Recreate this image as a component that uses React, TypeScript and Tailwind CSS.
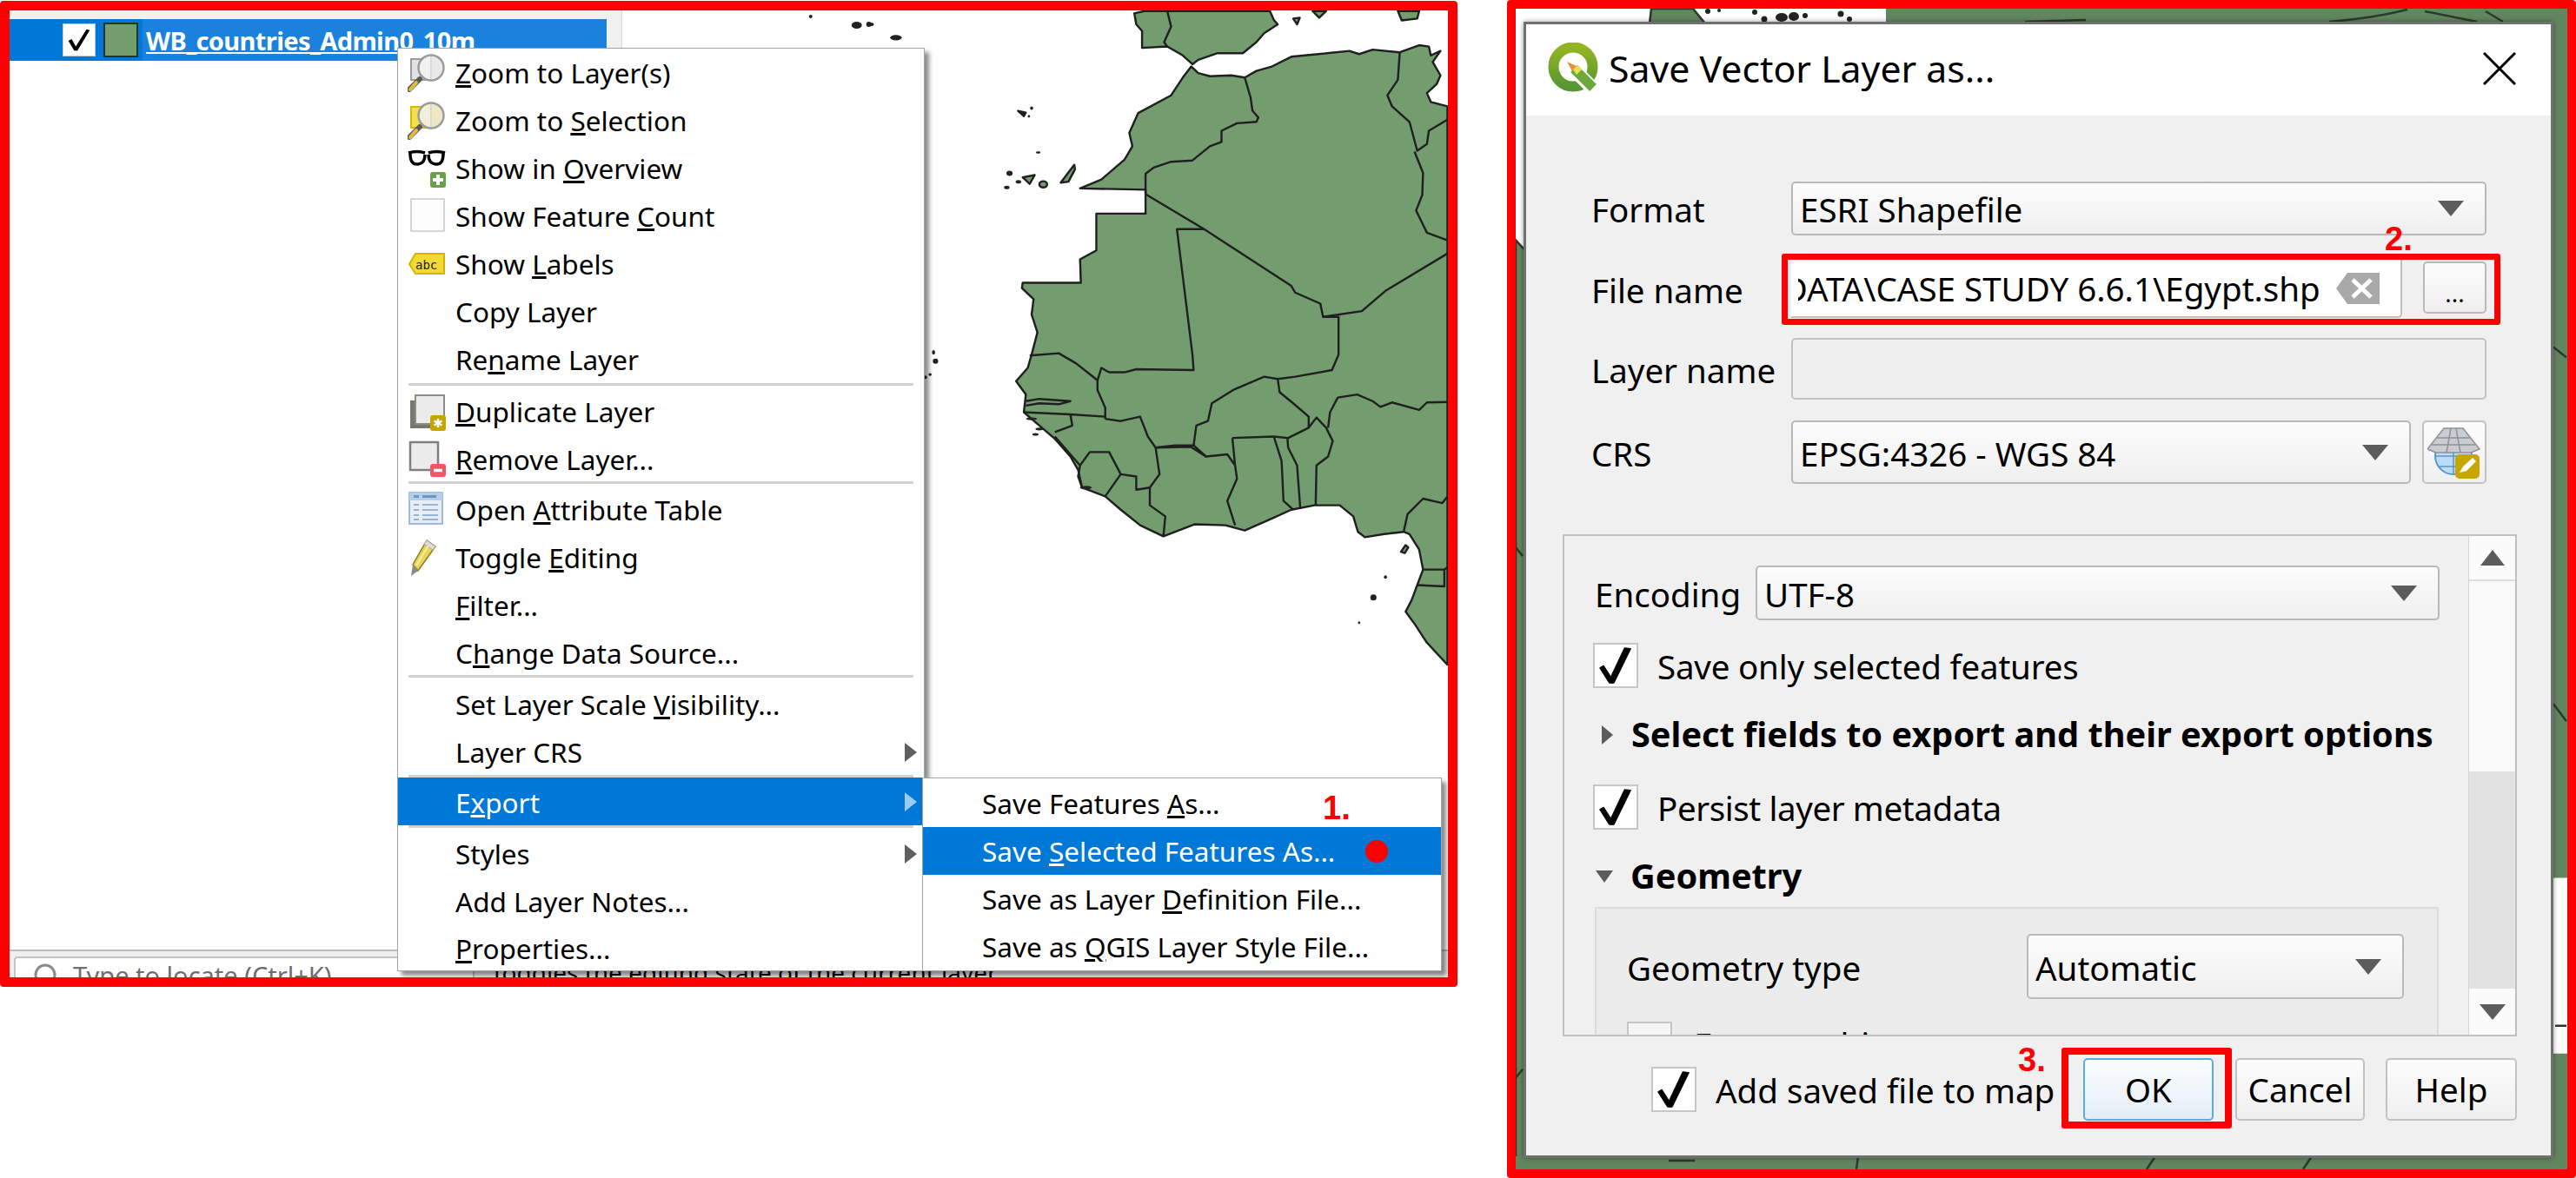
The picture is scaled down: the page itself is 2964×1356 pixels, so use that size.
import React from "react";

const Check = () => (
  <svg viewBox="0 0 52 52" className="w-full h-full">
    <path d="M6 29 L11 26 L20 40 L37 4 L45 5 L24 48 L18 48 Z" fill="#000" stroke="#000" strokeWidth="1" strokeLinejoin="round" />
  </svg>
);

const CheckBox = ({ className = "" }: { className?: string }) => (
  <div className={"w-[52px] h-[52px] shrink-0 bg-white border-2 border-[#c6c6c6] " + className}>
    <Check />
  </div>
);

const Tri = ({ color = "#5c5c5c", className = "" }: { color?: string; className?: string }) => (
  <svg viewBox="0 0 30 18" className={"w-[30px] h-[18px] " + className}>
    <path d="M0 0 H30 L15 18 Z" fill={color} />
  </svg>
);

const MenuArrow = ({ color = "#606060" }: { color?: string }) => (
  <svg viewBox="0 0 14 22" className="w-[14px] h-[22px]">
    <path d="M0 0 L14 11 L0 22 Z" fill={color} />
  </svg>
);

const Magnifier = ({ selected }: { selected?: boolean }) => (
  <svg viewBox="0 0 44 44" className="w-[44px] h-[44px]">
    <rect x="4" y="6" width="26" height="24" fill={selected ? "#f4e04d" : "#e2e2e2"} stroke={selected ? "#d9b900" : "#9a9a9a"} strokeWidth="2" />
    <path d="M2 41 L14 29" stroke="#5a5a5a" strokeWidth="6" strokeLinecap="round" />
    <path d="M3 41 L10 33" stroke="#e4bd3b" strokeWidth="4" strokeLinecap="round" />
    <circle cx="27" cy="16" r="14.5" fill={selected ? "#f2efd8" : "#f1f1f1"} stroke="#9b9b9b" strokeWidth="2.5" />
    <path d="M27 3 V29" stroke="#cfcfcf" strokeWidth="1.5" />
    <path d="M27 3 A13 13 0 0 1 27 29 Z" fill={selected ? "#e9e2b5" : "#e4e4e4"} opacity="0.6" />
  </svg>
);

const Glasses = () => (
  <svg viewBox="0 0 44 44" className="w-[44px] h-[44px]">
    <path d="M1 4 Q11 1 20 4 M24 4 Q33 1 43 4" stroke="#000" strokeWidth="3.5" fill="none" />
    <path d="M3 5 Q3 18 12 17 Q20 16 20 6 M24 6 Q24 16 32 17 Q41 18 41 5" stroke="#000" strokeWidth="3.5" fill="none" />
    <rect x="26" y="26" width="18" height="18" rx="3" fill="#589632" opacity="0.9" />
    <path d="M35 29 V41 M29 35 H41" stroke="#fff" strokeWidth="4" />
  </svg>
);

const BlankIcon = () => (
  <svg viewBox="0 0 44 44" className="w-[44px] h-[44px]">
    <rect x="4" y="2" width="38" height="37" fill="#fdfdfd" stroke="#c9c9c9" strokeWidth="1.5" />
  </svg>
);

const LabelsIcon = () => (
  <svg viewBox="0 0 44 28" className="w-[44px] h-[28px]">
    <path d="M9 2 H42 V25 H9 L2 14 Z" fill="#f2d936" stroke="#d6b400" strokeWidth="2" />
    <text x="9" y="20" fontSize="14" fontFamily="'DejaVu Sans Mono', monospace" fill="#222">abc</text>
  </svg>
);

const DuplicateIcon = () => (
  <svg viewBox="0 0 44 44" className="w-[44px] h-[44px]">
    <rect x="3" y="9" width="34" height="32" fill="#77776d" />
    <rect x="9" y="3" width="33" height="33" fill="#ececec" stroke="#8c8c84" strokeWidth="2" />
    <rect x="26" y="26" width="18" height="18" rx="3" fill="#c8a600" />
    <path d="M35 30 V40 M30.5 32.5 L39.5 37.5 M39.5 32.5 L30.5 37.5" stroke="#fff" strokeWidth="2.5" />
  </svg>
);

const RemoveIcon = () => (
  <svg viewBox="0 0 44 44" className="w-[44px] h-[44px]">
    <rect x="3" y="2" width="32" height="32" fill="#ececec" stroke="#808080" strokeWidth="2.5" />
    <rect x="26" y="27" width="18" height="15" rx="3" fill="#f55560" />
    <path d="M30 34.5 H40" stroke="#fff" strokeWidth="3.5" />
  </svg>
);

const TableIcon = () => (
  <svg viewBox="0 0 44 44" className="w-[44px] h-[44px]">
    <rect x="2" y="2" width="38" height="36" fill="#e6edf5" stroke="#81a8d4" strokeWidth="1.5" />
    <rect x="2" y="2" width="38" height="9" fill="#b4cfea" />
    <path d="M7 6.5 H13 M17 6.5 H33" stroke="#7095c0" strokeWidth="3" />
    <path d="M7 16 H13 M17 16 H35 M7 22 H13 M17 22 H35 M7 28 H13 M17 28 H35 M7 33 H13 M17 33 H35" stroke="#7aa0cb" strokeWidth="1.5" />
  </svg>
);

const PencilIcon = () => (
  <svg viewBox="0 0 44 46" className="w-[44px] h-[46px]">
    <path d="M22 3 L32 10 L12 38 L6 31 Z" fill="#e9d45a" stroke="#8c7a1e" strokeWidth="1.5" />
    <path d="M22 3 L32 10 L29 14 L19 7 Z" fill="#dcdcdc" stroke="#aaa" strokeWidth="1" />
    <path d="M6 31 L12 38 L4 44 Z" fill="#8a8a8a" />
    <path d="M24 9 L10 32" stroke="#f6ecaa" strokeWidth="2" />
  </svg>
);

type Item = { icon?: React.ReactNode; label: React.ReactNode; arrow?: boolean; active?: boolean; last?: boolean };

const MenuRow = ({ icon, label, arrow, active, last }: Item) => (
  <div className={"flex items-center pl-[11px] pr-[8px] shrink-0 " + (last ? "h-[53px] " : "h-[55px] ") + (active ? "bg-[#0078d7] text-white" : "text-black")}>
    <div className="w-[44px] h-[46px] shrink-0 flex items-center justify-center">{icon}</div>
    <div className={"ml-[11px] flex-1 text-[31.5px] leading-none whitespace-nowrap " + (active ? "pt-[3px]" : "")}>{label}</div>
    {arrow && <MenuArrow color={active ? "#9ccbf0" : "#606060"} />}
  </div>
);

const Sep = ({ className = "" }: { className?: string }) => (
  <div className={"mx-[12px] shrink-0 " + className}>
    <div className="h-[3px] bg-[#d2d2d2]" />
  </div>
);

const ContextMenu = () => (
  <div className="absolute left-[446px] top-[43px] w-[607px] h-[1063px] flex flex-col bg-white border border-[#a3a3a3] overflow-hidden shadow-[5px_5px_5px_rgba(0,0,0,0.45)]">
    <MenuRow icon={<Magnifier />} label={<><u>Z</u>oom to Layer(s)</>} />
    <MenuRow icon={<Magnifier selected />} label={<>Zoom to <u>S</u>election</>} />
    <MenuRow icon={<Glasses />} label={<>Show in <u>O</u>verview</>} />
    <MenuRow icon={<BlankIcon />} label={<>Show Feature <u>C</u>ount</>} />
    <MenuRow icon={<LabelsIcon />} label={<>Show <u>L</u>abels</>} />
    <MenuRow label="Copy Layer" />
    <MenuRow label={<>Re<u>n</u>ame Layer</>} />
    <Sep className="h-[5px]" />
    <MenuRow icon={<DuplicateIcon />} label={<><u>D</u>uplicate Layer</>} />
    <MenuRow icon={<RemoveIcon />} label={<><u>R</u>emove Layer...</>} />
    <Sep className="-mt-[2px] h-[5px]" />
    <MenuRow icon={<TableIcon />} label={<>Open <u>A</u>ttribute Table</>} />
    <MenuRow icon={<PencilIcon />} label={<>Toggle <u>E</u>diting</>} />
    <MenuRow label={<><u>F</u>ilter...</>} />
    <MenuRow label={<>C<u>h</u>ange Data Source...</>} />
    <Sep className="-mt-[2px] h-[6px]" />
    <MenuRow label={<>Set Layer Scale <u>V</u>isibility...</>} />
    <MenuRow label="Layer CRS" arrow />
    <Sep className="-mt-[1px] h-[3px]" />
    <MenuRow active arrow label={<>E<u>x</u>port</>} />
    <Sep className="h-[5px]" />
    <MenuRow arrow label="Styles" />
    <MenuRow label="Add Layer Notes..." />
    <MenuRow last label={<><u>P</u>roperties...</>} />
  </div>
);

const SubRow = ({ label, active }: { label: React.ReactNode; active?: boolean }) => (
  <div className={"h-[55px] flex items-center pl-[68px] text-[31.5px] leading-none whitespace-nowrap " + (active ? "bg-[#0078d7] text-white" : "text-black")}>
    <span>{label}</span>
  </div>
);

const SubMenu = () => (
  <div className="absolute left-[1050px] top-[883px] w-[598px] h-[223px] bg-white border border-[#a3a3a3] pt-[1px] overflow-hidden shadow-[5px_5px_5px_rgba(0,0,0,0.45)]">
    <SubRow label={<>Save Features <u>A</u>s...</>} />
    <SubRow active label={<>Save <u>S</u>elected Features As...</>} />
    <SubRow label={<>Save as Layer <u>D</u>efinition File...</>} />
    <SubRow label={<>Save as <u>Q</u>GIS Layer Style File...</>} />
  </div>
);

const MapDrawing = () => (
  <svg viewBox="716 12 951 1081" preserveAspectRatio="none" className="absolute inset-0 w-full h-full">
    <circle cx="933" cy="19" r="2" fill="#222" />
    <ellipse cx="986" cy="29" rx="6" ry="4" fill="#222" />
    <circle cx="1000" cy="28" r="3" fill="#222" />
    <g transform="translate(1000 0) scale(0.4464 0.5102)" fill="#739c6f" stroke="#1f1f1f" strokeWidth="2.4" strokeLinejoin="round">
      <path vectorEffect="non-scaling-stroke" d="M685 30 L710 25 L1035 25 L1045 45 L1055 55 L1020 75 L1000 95 L965 120 L900 120 L850 135 L835 145 L810 125 L770 105 L705 108 L705 70 L690 55 Z" />
      <path vectorEffect="non-scaling-stroke" fill="none" d="M770 25 L780 60 L762 95 L770 105" />
      <path vectorEffect="non-scaling-stroke" d="M1095 42 L1112 40 L1105 55 Z" />
      <path vectorEffect="non-scaling-stroke" d="M1145 25 L1180 25 L1162 40 Z" />
      <path vectorEffect="non-scaling-stroke" d="M1365 25 L1420 25 L1415 42 L1375 46 Z" />
      <path vectorEffect="non-scaling-stroke" d="M832 150 L850 165 L880 172 L935 170 L970 175 L1000 160 L1040 150 L1090 128 L1160 122 L1240 115 L1265 122 L1300 112 L1370 118 L1420 102 L1445 105 L1450 125 L1475 115 L1455 140 L1475 170 L1465 190 L1440 210 L1450 230 L1493 240 L1493 1500 L1440 1450 L1410 1410 L1385 1380 L1400 1355 L1415 1320 L1430 1285 L1420 1240 L1395 1205 L1380 1200 L1330 1205 L1280 1212 L1262 1200 L1250 1165 L1215 1140 L1150 1140 L1090 1150 L1040 1170 L970 1197 L920 1185 L840 1183 L760 1210 L700 1185 L650 1150 L610 1120 L550 1100 L540 1060 L520 1030 L480 990 L440 960 L400 930 L405 890 L380 860 L410 830 L420 800 L435 750 L420 710 L425 675 L395 650 L397 638 L547 638 L545 585 L587 565 L587 482 L714 482 L714 428 L545 425 L600 405 L660 360 L680 330 L672 300 L695 255 L780 215 L810 175 Z" />
      <path vectorEffect="non-scaling-stroke" fill="none" d="M970 175 L985 220 L990 250 L1005 265 L1000 275 L950 278 L910 295 L910 320 L880 330 L835 362 L780 365 L735 378 L714 392 L714 428 L714 438 L865 517 L1090 645 L1100 660 L1165 685 L1172 715 L1272 702 L1335 655 L1493 572" />
      <path vectorEffect="non-scaling-stroke" fill="none" d="M1370 118 L1365 180 L1338 215 L1350 240 L1395 275 L1415 340 L1440 325 L1445 295 L1493 270 M1408 342 L1430 390 L1428 440 L1412 475 L1440 525 L1493 542" />
      <path vectorEffect="non-scaling-stroke" fill="none" d="M865 517 L795 517 L835 800 L838 835 L690 833 L660 840 L620 840 L600 830 L590 858 L590 880 L610 920 L610 945 M415 802 L490 797 L535 820 L590 858" />
      <path vectorEffect="non-scaling-stroke" fill="none" d="M1172 715 L1212 715 L1212 800 L1195 835 L1100 850 L1055 855 L1020 850 L940 880 L885 910 L875 950 L845 960 L838 1005 L790 1005 L740 1010 L720 985 L700 940 L650 950 L610 945" />
      <path vectorEffect="non-scaling-stroke" fill="none" d="M400 930 L520 935 L610 940 M520 935 L525 960 L480 975 M405 905 L440 900 L520 905 L490 912 L440 910 L405 915" />
      <path vectorEffect="non-scaling-stroke" fill="none" d="M480 985 L545 1050 L570 1020 L620 1020 L650 1070 L690 1075 L690 1105 L725 1100 L750 1070 L740 1010 M545 1050 L540 1075 L550 1100 M650 1070 L610 1120 M725 1100 L725 1140 L765 1165 L760 1210" />
      <path vectorEffect="non-scaling-stroke" fill="none" d="M740 1010 L830 1008 L870 1030 L925 1025 L945 1050 L950 1080 L925 1130 L945 1185 M938 988 L1045 985 L1065 1040 L1070 1130 L1095 1150 M938 988 L945 1050 M1045 985 L1080 988 L1082 1010 L1105 1050 L1113 1145 M1082 988 L1135 965 L1155 942 L1180 965 L1197 995 L1185 1030 L1155 1050 L1153 1140" />
      <path vectorEffect="non-scaling-stroke" fill="none" d="M1055 855 L1060 885 L1095 910 L1135 940 L1135 965 M838 1005 L870 1030 M1185 965 L1190 930 L1210 897 L1260 890 L1300 905 L1320 918 L1350 908 L1420 925 L1440 908 L1493 907 M1380 1200 L1390 1160 L1430 1125 L1480 1135 L1493 1120 M1430 1285 L1485 1285 L1485 1323 L1415 1320 M1485 1285 L1493 1280" />
      <path vectorEffect="non-scaling-stroke" d="M1373 1245 L1385 1230 L1392 1235 L1383 1248 Z" />
      <path vectorEffect="non-scaling-stroke" d="M397 400 L428 395 L415 415 Z" />
      <ellipse vectorEffect="non-scaling-stroke" cx="450" cy="416" rx="10" ry="7" />
      <path vectorEffect="non-scaling-stroke" d="M495 412 L530 372 L532 382 L515 410 Z" />
      <path vectorEffect="non-scaling-stroke" fill="#222" d="M385 250 L405 254 L400 262 Z" />
      <g fill="#222" stroke="none">
        <ellipse cx="70" cy="85" rx="15" ry="6" />
        <ellipse cx="5" cy="55" rx="8" ry="4" />
        <circle cx="420" cy="244" r="4" />
        <circle cx="413" cy="262" r="3" />
        <ellipse cx="437" cy="344" rx="6" ry="2.5" />
        <ellipse cx="363" cy="391" rx="8" ry="6" />
        <ellipse cx="386" cy="410" rx="7" ry="4" />
        <ellipse cx="356" cy="423" rx="7" ry="4" />
        <ellipse cx="167" cy="795" rx="4" ry="5" />
        <ellipse cx="172" cy="815" rx="7" ry="6" />
        <ellipse cx="158" cy="845" rx="4" ry="3" />
        <ellipse cx="146" cy="851" rx="4" ry="4" />
        <ellipse cx="1302" cy="1348" rx="8" ry="7" />
        <circle cx="1333" cy="1302" r="4" />
        <circle cx="1265" cy="1405" r="3" />
        <ellipse cx="420" cy="945" rx="14" ry="3" />
        <ellipse cx="440" cy="968" rx="10" ry="3" />
        <ellipse cx="430" cy="980" rx="8" ry="3" />
        <ellipse cx="560" cy="1100" rx="15" ry="4" />
      </g>
    </g>
  </svg>
);

const LeftPanel = () => (
  <div className="relative mt-[1px] w-[1677px] h-[1135px] shrink-0 border-[11px] border-[#ff0000] rounded-[4px] bg-white flex flex-col overflow-hidden">
    <div className="flex-1 min-h-0 flex">
      <div className="w-[705px] shrink-0 flex">
        <div className="flex-1 flex flex-col">
          <div className="h-[10px] shrink-0 bg-[#f0f0f0]" />
          <div className="h-[48px] shrink-0 flex items-center bg-[#0078d7] pl-[61px]">
            <div className="w-[38px] h-[38px] bg-white border border-[#b8cde0]">
              <svg viewBox="0 0 38 38" className="w-full h-full">
                <path d="M6 20 L10 18 L15 27 L28 6 L32 7 L17 32 L13 32 Z" fill="#000" />
              </svg>
            </div>
            <div className="ml-[9px] w-[40px] h-[40px] bg-[#739c6f] border-2 border-[#26332a]" />
            <div className="ml-[5px] h-[48px] flex-1 bg-[#1a82dc] flex items-center pl-[4px] text-white font-bold text-[29px] leading-none tracking-[-0.6px] underline whitespace-nowrap overflow-hidden">
              WB_countries_Admin0_10m
            </div>
          </div>
          <div className="flex-1 bg-white" />
        </div>
        <div className="w-[18px] shrink-0 bg-[#f0f0f0] border-r border-[#d8d8d8]" />
      </div>
      <div className="relative flex-1">
        <MapDrawing />
      </div>
    </div>
    <div className="relative h-[32px] shrink-0 bg-[#f0f0f0] border-t-2 border-[#bdbdbd] flex pl-[5px] overflow-hidden">
      <div className="mt-[6px] w-[530px] h-[40px] shrink-0 bg-white border-2 border-[#c3c3c3] rounded-tl-[4px] flex items-start pl-[20px] pt-[5px]">
        <svg viewBox="0 0 30 30" className="w-[30px] h-[30px]">
          <circle cx="14" cy="14" r="11" fill="none" stroke="#8a8a8a" strokeWidth="3" />
        </svg>
        <span className="ml-[16px] text-[29px] leading-none text-[#6e6e6e] whitespace-nowrap">Type to locate (Ctrl+K)</span>
      </div>
      <span className="ml-[18px] mt-[10px] text-[28px] leading-none text-black whitespace-nowrap">Toggles the editing state of the current layer</span>
    </div>
    <ContextMenu />
    <SubMenu />
    <div className="absolute left-[1560px] top-[955px] w-[26px] h-[26px] rounded-full bg-[#ff0000]" />
    <div className="absolute left-[1511px] top-[899px] text-[38px] leading-none font-bold text-[#ff0000] font-['Liberation_Sans',sans-serif]">1.</div>
  </div>
);

const Combo = ({ label, className = "" }: { label: string; className?: string }) => (
  <div className={"flex items-center justify-between bg-gradient-to-b from-[#fdfdfd] to-[#efefef] border-2 border-[#b9b9b9] rounded-[5px] pl-[8px] pr-[24px] text-[38.5px] leading-none text-black " + className}>
    <span className="pt-[3px]">{label}</span>
    <Tri />
  </div>
);

const Label = ({ children, className = "" }: { children: React.ReactNode; className?: string }) => (
  <div className={"pt-[3px] text-[38.5px] leading-none text-black whitespace-nowrap " + className}>{children}</div>
);

const SectionTitle = ({ children, className = "" }: { children: React.ReactNode; className?: string }) => (
  <div className={"text-[39.7px] font-bold leading-none text-black whitespace-nowrap " + className}>{children}</div>
);

const ButtonText = ({ children }: { children: React.ReactNode }) => (
  <span className="text-[38.5px] leading-none text-black">{children}</span>
);

const QgisLogo = () => (
  <svg viewBox="0 0 60 60" className="w-[60px] h-[60px] shrink-0">
    <defs>
      <linearGradient id="qg" x1="0" y1="0" x2="0" y2="1">
        <stop offset="0" stopColor="#93b523" />
        <stop offset="1" stopColor="#589632" />
      </linearGradient>
    </defs>
    <circle cx="29" cy="28" r="22.5" fill="none" stroke="url(#qg)" strokeWidth="12" />
    <path d="M24 25 L54 55" stroke="#fff" strokeWidth="16" />
    <path d="M30 30 L52 52" stroke="#6da83a" strokeWidth="11" />
    <path d="M22 22 L33 27 L28 33 Z" fill="#ef8d3c" />
    <path d="M29 31 L35 26 L39 31 L33 37 Z" fill="#e8df55" />
  </svg>
);

const ClearIcon = () => (
  <svg viewBox="0 0 52 38" className="w-[52px] h-[38px] shrink-0">
    <path d="M14 1 H51 V37 H14 L1 19 Z" fill="#a9a9a9" />
    <path d="M20 9 L41 29 M41 9 L20 29" stroke="#fff" strokeWidth="5" />
  </svg>
);

const GlobeIcon = () => (
  <svg viewBox="0 0 62 60" className="w-[62px] h-[60px]">
    <circle cx="30" cy="34" r="21" fill="#bcdcf7" stroke="#5b95cf" strokeWidth="2" />
    <path d="M9 34 H51 M30 13 V55 M14 46 H46" stroke="#5b95cf" strokeWidth="1.5" fill="none" />
    <path d="M19 2 H41 L60 26 L50 30 H10 L0 26 Z" fill="#c9cdd1" stroke="#8e9296" strokeWidth="1.5" />
    <path d="M27 2 L22 30 M33 2 L38 30 M11 13 H49 M5 21 H55" stroke="#8e9296" strokeWidth="1.5" />
    <rect x="32" y="32" width="28" height="28" rx="5" fill="#c8a600" />
    <path d="M37 53 L41 46 L52 36 L56 40 L45 51 Z" fill="#fff" />
  </svg>
);

const Backdrop = () => (
  <svg viewBox="1744 11 1210 1334" preserveAspectRatio="none" className="absolute inset-0 w-full h-full">
    <rect x="1744" y="11" width="1210" height="1334" fill="#ffffff" />
    <g fill="#628660" stroke="#333" strokeWidth="2.5">
      <path d="M1744 277 L1756 290 V1345 H1744 Z" />
      <path d="M1900 11 H1948 L1962 28 H1898 Z" />
      <path d="M2170 11 H2954 V1010 H2930 V11 Z" stroke="none" />
      <path d="M2170 11 H2954 V30 H2170 Z" stroke="none" />
      <path d="M2930 1212 H2954 V1345 H1744 V1330 H2930 Z" stroke="none" />
    </g>
    <g fill="none" stroke="#2c3a2a" strokeWidth="2.5">
      <path d="M2680 26 Q2730 22 2770 12 M2790 14 L2850 26 M2860 14 L2880 26 M2330 26 L2400 24" />
      <path d="M2938 400 L2953 412 M2938 810 L2953 830 M2940 1180 L2953 1180" />
      <path d="M1744 630 L1752 640 M1744 1240 L1752 1230" />
      <path d="M2136 1345 L2138 1330 M2470 1345 L2480 1330 M2660 1330 L2650 1345 M1920 1335 H1950" />
    </g>
    <g fill="#222">
      <circle cx="1965" cy="14" r="3" />
      <circle cx="1978" cy="13" r="2" />
      <circle cx="2019" cy="15" r="3" />
      <circle cx="2030" cy="23" r="3.5" />
      <ellipse cx="2050" cy="21" rx="7" ry="5" />
      <ellipse cx="2064" cy="20" rx="6" ry="5" />
      <circle cx="2077" cy="19" r="3" />
      <circle cx="2118" cy="17" r="3.5" />
      <circle cx="2128" cy="23" r="3" />
    </g>
  </svg>
);

function TriRight() {
  return (
    <svg viewBox="0 0 13 22" className="w-[13px] h-[22px] ml-[8px]">
      <path d="M0 0 L13 11 L0 22 Z" fill="#5c5c5c" />
    </svg>
  );
}

const Dialog = () => (
  <div className="relative ml-[9px] mt-[15px] w-[1185px] h-[1308px] border-[3px] border-[#707070] bg-[#f0f0f0] flex flex-col shadow-[0_0_6px_rgba(0,0,0,0.4)]">
    <div className="h-[105px] shrink-0 bg-white flex items-center pl-[25px] pb-[4px]">
      <QgisLogo />
      <div className="ml-[10px] pt-[2px] flex-1 text-[42.8px] leading-none text-black whitespace-nowrap">Save Vector Layer as...</div>
      <svg viewBox="0 0 38 38" className="w-[38px] h-[38px] mr-[40px]">
        <path d="M1 1 L37 37 M37 1 L1 37" stroke="#000" strokeWidth="3" />
      </svg>
    </div>
    <div className="flex-1 flex flex-col pt-[76px]">
      <div className="flex flex-col pl-[75px] w-[1105px]">
        <div className="flex items-center h-[62px]">
          <Label className="w-[230px]">Format</Label>
          <Combo label="ESRI Shapefile" className="w-[800px] h-[62px]" />
        </div>
        <div className="flex items-center h-[67px] mt-[28px]">
          <Label className="w-[230px]">File name</Label>
          <div className="w-[704px] h-[67px] bg-white border-b-2 border-r-2 border-[#c0c0c0] rounded-br-[5px] flex items-center pl-[8px] overflow-hidden">
            <div className="w-[618px] shrink-0 overflow-hidden flex justify-end pt-[3px]">
              <span className="shrink-0 text-[38.5px] leading-[1.4] text-black whitespace-nowrap pr-[17px]">C:\DATA\CASE STUDY 6.6.1\Egypt.shp</span>
            </div>
            <ClearIcon />
          </div>
          <div className="ml-[24px] w-[73px] h-[60px] mb-[4px] bg-gradient-to-b from-[#fdfdfd] to-[#efefef] border-2 border-[#b9b9b9] rounded-[5px] flex items-end justify-center pb-[8px] text-[28px] leading-none text-black">...</div>
        </div>
        <div className="flex items-center h-[71px] mt-[23px]">
          <Label className="w-[230px]">Layer name</Label>
          <div className="w-[800px] h-[71px] bg-[#efefef] border-2 border-[#c2c2c2] rounded-[5px]" />
        </div>
        <div className="flex items-center h-[73px] mt-[24px]">
          <Label className="w-[230px]">CRS</Label>
          <Combo label="EPSG:4326 - WGS 84" className="w-[713px] h-[73px]" />
          <div className="ml-[13px] w-[74px] h-[73px] bg-gradient-to-b from-[#fdfdfd] to-[#efefef] border-2 border-[#c2c2c2] rounded-[5px] flex items-center justify-center">
            <GlobeIcon />
          </div>
        </div>
      </div>
      <div className="ml-[42px] mt-[58px] w-[1098px] h-[578px] shrink-0 border-2 border-[#c0c0c0] flex overflow-hidden">
        <div className="flex-1 min-w-0 flex flex-col pt-[34px] pl-[35px] overflow-hidden">
          <div className="flex items-center h-[63px] shrink-0">
            <Label className="w-[185px]">Encoding</Label>
            <Combo label="UTF-8" className="w-[787px] h-[63px]" />
          </div>
          <div className="flex items-center mt-[26px] shrink-0">
            <CheckBox className="-ml-[2px]" />
            <Label className="ml-[22px] tracking-[-0.2px]">Save only selected features</Label>
          </div>
          <div className="flex items-center h-[46px] mt-[31px] shrink-0">
            <TriRight />
            <SectionTitle className="ml-[21px]">Select fields to export and their export options</SectionTitle>
          </div>
          <div className="flex items-center mt-[34px] shrink-0">
            <CheckBox className="-ml-[2px]" />
            <Label className="ml-[22px] tracking-[-0.4px]">Persist layer metadata</Label>
          </div>
          <div className="flex items-center h-[46px] mt-[31px] shrink-0">
            <svg viewBox="0 0 20 14" className="w-[20px] h-[14px] ml-[1px]"><path d="M0 0 H20 L10 14 Z" fill="#5c5c5c" /></svg>
            <SectionTitle className="ml-[20px]">Geometry</SectionTitle>
          </div>
          <div className="mt-[12px] w-[971px] h-[300px] shrink-0 bg-[#ececec] border-2 border-[#dcdcdc] rounded-[2px] pt-[29px] pl-[35px] flex flex-col">
            <div className="flex items-center h-[75px]">
              <Label className="w-[460px]">Geometry type</Label>
              <Combo label="Automatic" className="w-[434px] h-[75px]" />
            </div>
            <div className="flex items-start mt-[26px]">
              <div className="w-[52px] h-[52px] bg-[#f5f5f5] border-2 border-[#c6c6c6]" />
              <Label className="ml-[25px] mt-[4px]">Force multi-type</Label>
            </div>
          </div>
        </div>
        <div className="w-[54px] shrink-0 flex flex-col border-l border-[#d4d4d4]">
          <div className="h-[52px] shrink-0 bg-[#fbfbfb] border-b-2 border-[#dddddd] flex items-center justify-center">
            <svg viewBox="0 0 28 18" className="w-[28px] h-[18px]"><path d="M14 0 L28 18 H0 Z" fill="#5c5c5c" /></svg>
          </div>
          <div className="h-[219px] shrink-0 bg-[#f9f9f9]" />
          <div className="flex-1 bg-[#e2e2e2]" />
          <div className="h-[53px] shrink-0 bg-[#fbfbfb] flex items-center justify-center">
            <Tri className="w-[28px]" />
          </div>
        </div>
      </div>
      <div className="ml-[42px] mt-[25px] w-[1098px] h-[72px] flex items-center shrink-0">
        <CheckBox className="ml-[102px]" />
        <Label className="ml-[22px] w-[423px]">Add saved file to map</Label>
        <div className="w-[150px] h-[72px] bg-gradient-to-b from-[#fdfdfd] to-[#e4eef8] border-2 border-[#5aaae6] rounded-[5px] flex items-center justify-center"><ButtonText>OK</ButtonText></div>
        <div className="ml-[25px] w-[149px] h-[72px] bg-gradient-to-b from-[#fdfdfd] to-[#efefef] border-2 border-[#c2c2c2] rounded-[5px] flex items-center justify-center"><ButtonText>Cancel</ButtonText></div>
        <div className="ml-[24px] w-[151px] h-[72px] bg-gradient-to-b from-[#fdfdfd] to-[#efefef] border-2 border-[#c2c2c2] rounded-[5px] flex items-center justify-center"><ButtonText>Help</ButtonText></div>
      </div>
    </div>
  </div>
);

const RightPanel = () => (
  <div className="relative ml-[57px] mt-[0px] w-[1230px] h-[1356px] shrink-0 border-[10px] border-[#ff0000] rounded-[4px] overflow-hidden">
    <Backdrop />
    <Dialog />
    <div className="absolute left-[306px] top-[282px] w-[827px] h-[82px] border-[7px] border-[#ff0000] rounded-[3px]" />
    <div className="absolute left-[628px] top-[1196px] w-[196px] h-[93px] border-[8px] border-[#ff0000] rounded-[3px]" />
    <div className="absolute left-[1000px] top-[246px] text-[38px] leading-none font-bold text-[#ff0000] font-['Liberation_Sans',sans-serif]">2.</div>
    <div className="absolute left-[578px] top-[1191px] text-[38px] leading-none font-bold text-[#ff0000] font-['Liberation_Sans',sans-serif]">3.</div>
  </div>
);

export default function App() {
  return (
    <div className="w-[2964px] h-[1356px] bg-white flex overflow-hidden font-['Noto_Sans',sans-serif]">
      <LeftPanel />
      <RightPanel />
    </div>
  );
}
